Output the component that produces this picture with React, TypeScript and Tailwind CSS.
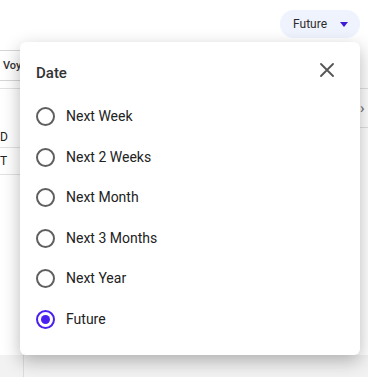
import React from 'react';

const options = ['Next Week', 'Next 2 Weeks', 'Next Month', 'Next 3 Months', 'Next Year', 'Future'];

const Radio: React.FC<{ checked: boolean }> = ({ checked }) => (
  <span
    className={
      'flex h-[19px] w-[19px] items-center justify-center rounded-full border-2 ' +
      (checked ? 'border-[#4a1ff0]' : 'border-[#5f5f5f]')
    }
  >
    {checked && <span className="h-[9px] w-[9px] rounded-full bg-[#4a1ff0]" />}
  </span>
);

const App: React.FC = () => {
  const selected = 'Future';

  return (
    <div
      className="relative flex h-[377px] w-[368px] flex-col overflow-hidden bg-white"
      style={{ fontFamily: 'Roboto, "Liberation Sans", sans-serif' }}
    >
      {/* page behind the popover */}
      <div className="flex h-[48px] justify-end pr-2 pt-[10px]">
        <button className="flex h-[28px] items-center gap-[13px] rounded-full bg-[#eff3fe] pl-[13px] pr-[12px] text-[12px] text-[#2b2b2b]">
          Future
          <svg width="8" height="5" viewBox="0 0 8 5">
            <path d="M0 0h8L4 5z" fill="#3f17d6" />
          </svg>
        </button>
      </div>

      <div className="flex h-[41px] items-start border-b border-[#e2e2e2] pt-[2px]">
        <div className="h-[31px] w-[40px] rounded-r border border-l-0 border-[#d6d6d6] pl-[3px] pt-[7px] text-[11px] font-medium text-[#333]">
          Voyage
        </div>
      </div>

      <div className="flex flex-1">
        <div className="flex w-[20px] flex-col text-[12px] text-[#222]">
          <div className="h-[39px]" />
          <div className="flex h-[20px] items-end border-b border-[#e2e2e2] pb-[4px] leading-none">D</div>
          <div className="flex h-[27px] items-center border-b border-[#e2e2e2] leading-none">T</div>
        </div>
        <div className="flex-1" />
        <div className="flex w-[8px] flex-col">
          <div className="flex h-[39px] items-center border-b border-[#e2e2e2] text-[15px] leading-none text-[#666]">›</div>
        </div>
      </div>

      <div className="flex h-[22px] bg-[#f2f2f2]">
        <div className="w-[24px] border-r border-[#dcdcdc]" />
      </div>

      {/* date popover */}
      <div className="absolute left-[20px] top-[42px] w-[340px] rounded-md bg-white pb-[15px] shadow-[0_6px_18px_rgba(0,0,0,0.28)]">
        <div className="flex items-center justify-between pl-[16px] pr-[26px] pt-[20px]">
          <h2 className="text-[15px] font-medium text-[#333]">Date</h2>
          <svg width="14" height="14" viewBox="0 0 14 14" className="mt-[-6px]">
            <path d="M1 1l12 12M13 1L1 13" stroke="#555" strokeWidth="1.8" strokeLinecap="round" />
          </svg>
        </div>
        <div className="mt-[12px] flex flex-col">
          {options.map((o) => (
            <label key={o} className="flex h-[40.5px] items-center gap-[11px] pl-[16px]">
              <Radio checked={o === selected} />
              <span className="text-[14px] text-[#222]">{o}</span>
            </label>
          ))}
        </div>
      </div>
    </div>
  );
};

export default App;
